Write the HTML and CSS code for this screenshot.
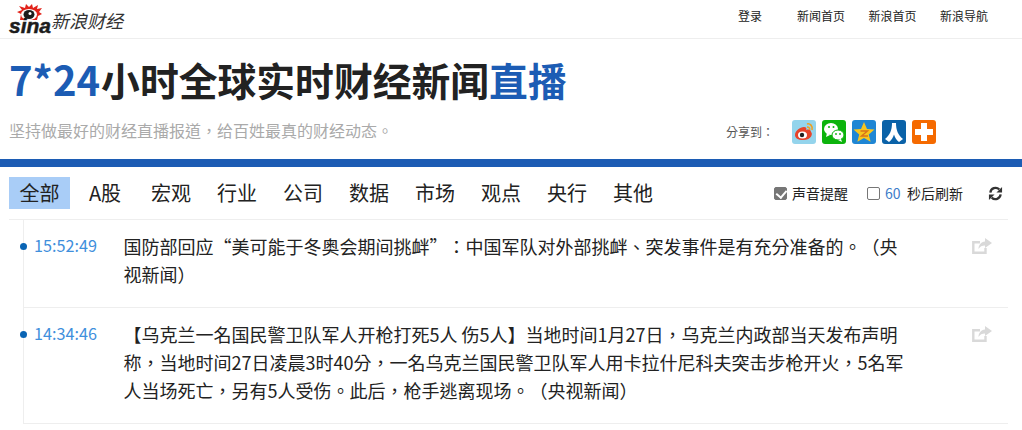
FILE: index.html
```html
<!DOCTYPE html>
<html lang="zh-CN">
<head>
  <meta charset="UTF-8" />
  <title>7*24小时全球实时财经新闻直播</title>
  <link rel="stylesheet" href="styles.css">
</head>
<body>

<div class="topbar">
  <a class="logo">
    <span class="logo-mark">
      <svg width="26" height="16" viewBox="0 0 26 16">
        <path d="M3 16 L4 10 L0 8 L5 6 L2 2 L8 4 L9 0 L12 3 L15 0 L16 4 L21 1 L20 5 L25 4 L22 8 L25 10 L21 12 L20 16 Z" fill="#e2231a"/>
        <ellipse cx="12" cy="10.500" rx="8" ry="5.500" fill="#fff"/>
        <ellipse cx="12" cy="10.500" rx="5.500" ry="4.500" fill="#1c1c1c"/>
        <circle cx="13" cy="9.500" r="1.500" fill="#fff"/>
      </svg>
      <span class="logo-sina">sina</span>
    </span>
    <span class="logo-name">新浪财经</span>
  </a>
  <nav class="toplinks">
    <a class="login">登录</a>
    <a>新闻首页</a>
    <a>新浪首页</a>
    <a>新浪导航</a>
  </nav>
</div>

<div class="banner">
  <h1><em class="num">7*24</em>小时全球实时财经新闻<em>直播</em></h1>
  <div class="banner-sub">
    <p class="mid" lang="zh-TW">坚持做最好的财经直播报道，给百姓最真的财经动态。</p>
    <div class="share">
      <span class="share-label mid" lang="zh-TW">分享到：</span>
      <svg class="share-icon" viewBox="0 0 24 24">
        <rect width="24" height="24" rx="3" fill="#94d4ec"/>
        <path d="M3 15c0-4 5-8 9-8 2 0 3 1 2 3 3-1 5 0 5 2 2 1 1 8-8 8-5 0-8-2-8-5z" fill="#e6432a"/>
        <ellipse cx="10.500" cy="15" rx="4.500" ry="3.500" fill="#fff"/>
        <circle cx="10" cy="15" r="2.200" fill="#222"/>
        <path d="M15 4c3-1 6 2 5 6M15 7c2 0 3 1 2.500 3" fill="none" stroke="#f0a020" stroke-width="1.600"/>
      </svg>
      <svg class="share-icon" viewBox="0 0 24 24">
        <rect width="24" height="24" rx="3" fill="#0cb30c"/>
        <ellipse cx="9" cy="9" rx="7" ry="6" fill="#fff"/>
        <path d="M5 13l-1 4 4-2z" fill="#fff"/>
        <ellipse cx="16" cy="15" rx="6" ry="5" fill="#fff" stroke="#0cb30c"/>
        <path d="M19 19l1 3-4-2z" fill="#fff"/>
        <circle cx="7" cy="7" r="1" fill="#0cb30c"/><circle cx="11.500" cy="7" r="1" fill="#0cb30c"/>
        <circle cx="14" cy="14" r=".9" fill="#0cb30c"/><circle cx="18" cy="14" r=".9" fill="#0cb30c"/>
      </svg>
      <svg class="share-icon" viewBox="0 0 24 24">
        <rect width="24" height="24" rx="3" fill="#1f86d4"/>
        <path d="M12 2l3 7 7.500.6-5.700 4.800 1.800 7.400L12 18l-6.600 3.800 1.800-7.400L1.500 9.600 9 9z" fill="#f7c51e"/>
        <path d="M8.500 11h7l-6 5h6.500" fill="none" stroke="#d9731a" stroke-width="1.400"/>
      </svg>
      <svg class="share-icon" viewBox="0 0 24 24">
        <rect width="24" height="24" rx="3" fill="#0a62a8"/>
        <path d="M10 3h4c0 7 2 12 7 16l-4 3c-2.500-2-4-4.500-5-7.500-1 3-2.500 5.500-5 7.500l-4-3c5-4 7-9 7-16z" fill="#fff"/>
      </svg>
      <svg class="share-icon" viewBox="0 0 24 24">
        <rect width="24" height="24" rx="3" fill="#f56a00"/>
        <path d="M9 3h6v6h6v6h-6v6H9v-6H3V9h6z" fill="#fff"/>
      </svg>
    </div>
  </div>
</div>

<div class="tabs-row">
  <ul class="tabs">
    <li class="active">全部</li>
    <li>A股</li>
    <li>宏观</li>
    <li>行业</li>
    <li>公司</li>
    <li>数据</li>
    <li>市场</li>
    <li>观点</li>
    <li>央行</li>
    <li>其他</li>
  </ul>
  <div class="tools">
    <label class="tool sound"><span class="check checked"></span>声音提醒</label>
    <label class="tool refresh"><span class="check"></span><b>60</b>秒后刷新</label>
    <svg class="reload" viewBox="0 0 16 16">
      <path d="M2.500 7A5.600 5.600 0 0 1 12 3.600" fill="none" stroke="#333" stroke-width="2.400"/>
      <path d="M15 1v6H9z" fill="#333"/>
      <path d="M13.500 9A5.600 5.600 0 0 1 4 12.400" fill="none" stroke="#333" stroke-width="2.400"/>
      <path d="M1 15V9h6z" fill="#333"/>
    </svg>
  </div>
</div>

<div class="feed">
  <div class="item">
    <span class="time">15:52:49</span>
    <p class="text mid" lang="zh-TW">国防部回应“美可能于冬奥会期间挑衅”：中国军队对外部挑衅、突发事件是有充分准备的。（央视新闻）</p>
    <svg class="item-share" viewBox="0 0 20 16">
      <path d="M13.500 10v4.700H1.300V4.300H8" fill="none" stroke="#d9d9d9" stroke-width="2.400"/>
      <path d="M13 0l7 5-7 5V7.500c-3 0-5 1-6.500 3.500C6.500 7 9 4 13 3.500z" fill="#d9d9d9"/>
    </svg>
  </div>
  <div class="item">
    <span class="time">14:34:46</span>
    <p class="text mid" lang="zh-TW">【乌克兰一名国民警卫队军人开枪打死5人 伤5人】当地时间1月27日，乌克兰内政部当天发布声明称，当地时间27日凌晨3时40分，一名乌克兰国民警卫队军人用卡拉什尼科夫突击步枪开火，5名军人当场死亡，另有5人受伤。此后，枪手逃离现场。（央视新闻）</p>
    <svg class="item-share" viewBox="0 0 20 16">
      <path d="M13.500 10v4.700H1.300V4.300H8" fill="none" stroke="#d9d9d9" stroke-width="2.400"/>
      <path d="M13 0l7 5-7 5V7.500c-3 0-5 1-6.500 3.500C6.500 7 9 4 13 3.500z" fill="#d9d9d9"/>
    </svg>
  </div>
</div>

</body>
</html>
```

FILE: styles.css
```css
* {
  box-sizing: border-box;
}
html, body {
  height: 430px;
  overflow: hidden;
}
body {
  margin: 0;
  background: #fff;
  color: #222;
  font-family: "Noto Sans CJK SC", "Liberation Sans", sans-serif;
  text-spacing-trim: space-all;
}
h1, p, ul {
  margin: 0;
  padding: 0;
}
/* centred punctuation, as on the original page */
.mid {
  font-family: "Noto Sans CJK TC", sans-serif;
}
.topbar {
  display: flex;
  justify-content: space-between;
  align-items: center;
  height: 39px;
  padding: 0 34px 0 9px;
  border-bottom: 1px solid #eee;
}
.logo {
  display: flex;
  align-items: center;
  height: 38px;
}
.logo-mark {
  display: flex;
  flex-direction: column;
  width: 42px;
  margin-top: 1px;
  line-height: 1;
}
.logo-mark svg {
  margin-left: 8px;
  margin-bottom: -4px;
}
.logo-sina {
  font: italic bold 21px/20px "Liberation Sans", sans-serif;
  color: #1c1c1c;
  -webkit-text-stroke: 0.5px #1c1c1c;
}
.logo-name {
  margin: 1px 0 0 0;
  font-size: 18px;
  line-height: 24px;
  font-style: italic;
  color: #333;
}
.toplinks {
  display: flex;
  gap: 23.500px;
  padding-bottom: 7px;
  font-size: 12px;
}
.toplinks .login {
  margin-right: 11.500px;
}
.banner {
  height: 128px;
  padding: 13px 9px 0;
  border-bottom: 8px solid #1c5cb4;
}
.banner h1 {
  font-size: 38.800px;
  line-height: 54px;
  font-weight: bold;
  color: #222;
}
.banner h1 em {
  font-style: normal;
  color: #1c5cb4;
}
.banner h1 .num {
  font-size: 40px;
  margin-right: 1px;
}
.banner-sub {
  display: flex;
  justify-content: space-between;
  align-items: center;
  margin-top: 12px;
  padding-right: 77px;
}
.banner-sub p {
  padding-bottom: 4px;
  font-size: 16px;
  color: #aaa;
}
.share {
  display: flex;
  align-items: center;
  gap: 6px;
}
.share-label {
  width: 60px;
  padding-bottom: 2px;
  font-size: 12px;
  color: #555;
}
.share-icon {
  width: 24px;
  height: 24px;
}
.tabs-row {
  display: flex;
  justify-content: space-between;
  align-items: center;
  height: 53px;
  margin: 0 14px 0 9px;
  border-bottom: 1px solid #eee;
}
.tabs {
  display: flex;
  gap: 6px;
  list-style: none;
}
.tabs li {
  width: 60px;
  font-size: 20px;
  line-height: 32px;
  text-align: center;
  color: #222;
}
.tabs li.active {
  width: 61px;
  margin-right: -1px;
  background: #a9cdf7;
}
.tools {
  display: flex;
  align-items: center;
  font-size: 14px;
}
.tool {
  display: flex;
  align-items: center;
}
.check {
  width: 13px;
  height: 13px;
  margin-right: 5px;
  border: 1px solid #767676;
  border-radius: 2px;
}
.check.checked {
  background: #767676;
  position: relative;
}
.check.checked::after {
  content: "";
  position: absolute;
  left: 3px;
  top: 0;
  width: 5px;
  height: 8px;
  border: solid #fff;
  border-width: 0 2px 2px 0;
  transform: rotate(40deg);
}
.refresh {
  margin-left: 19px;
}
.refresh b {
  width: 22px;
  font-weight: normal;
  font-size: 14px;
  color: #3d7cc9;
}
.reload {
  width: 15px;
  height: 15px;
  margin-left: 25px;
  margin-right: 5px;
}
.feed {
  margin: 0 14px 0 23px;
  border-left: 1px solid #eee;
}
.item {
  position: relative;
  display: flex;
  align-items: flex-start;
  padding: 12px 0 19px 10px;
  border-bottom: 1px solid #eee;
}
.item::before {
  content: "";
  position: absolute;
  left: -4px;
  top: 23px;
  width: 7px;
  height: 7px;
  border-radius: 50%;
  background: #0a64b4;
}
.time {
  width: 89.500px;
  flex: none;
  font-size: 16.200px;
  line-height: 27px;
  color: #3f8fdc;
}
.text {
  width: 790px;
  font-size: 18px;
  line-height: 28px;
  color: #222;
}
.item-share {
  width: 20px;
  height: 16px;
  margin: 6px 0 0 58.500px;
  flex: none;
}
```
